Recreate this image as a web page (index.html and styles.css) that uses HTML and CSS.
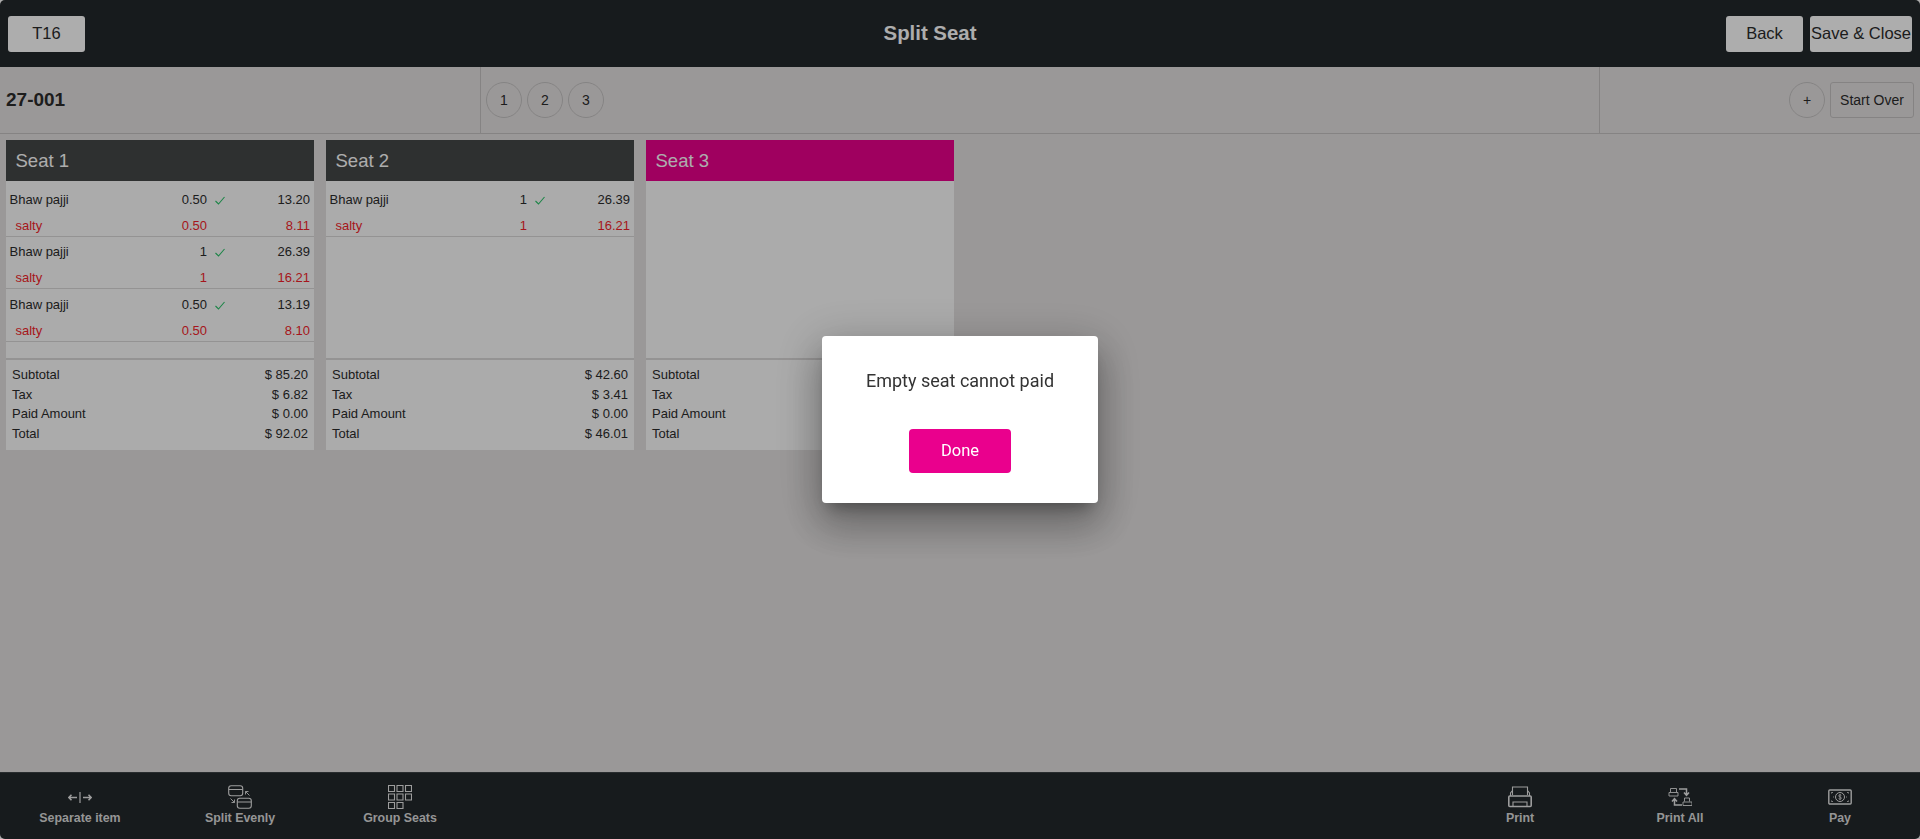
FILE: index.html
```html
<!DOCTYPE html>
<html lang="en">
<head>
  <meta charset="UTF-8" />
  <meta name="viewport" content="width=device-width, initial-scale=1.0" />
  <title>Split Seat</title>
  <link rel="stylesheet" href="styles.css">
</head>
<body>
  <div class="app">
    <header class="topbar">
      <div class="topbar-left"><button class="top-btn table-btn" type="button">T16</button></div>
      <h1>Split Seat</h1>
      <div class="topbar-right">
        <button class="top-btn back-btn" type="button">Back</button>
        <button class="top-btn save-btn" type="button">Save &amp; Close</button>
      </div>
    </header>

    <section class="check-bar">
      <div class="check-no">27-001</div>
      <div class="seat-tabs">
        <button class="circle-btn" type="button">1</button>
        <button class="circle-btn" type="button">2</button>
        <button class="circle-btn" type="button">3</button>
      </div>
      <div class="check-actions">
        <button class="circle-btn" type="button">+</button>
        <button class="over-btn" type="button">Start Over</button>
      </div>
    </section>

    <main class="seats">
      <article class="seat">
        <h2 class="seat-title">Seat 1</h2>
        <div class="seat-items">
          <div class="item">
            <div class="line"><span>Bhaw pajji</span><span class="qty">0.50</span><svg class="tick" viewBox="0 0 10 9"><path d="M.5 5l3 3L9.5 1"/></svg><span class="price">13.20</span></div>
            <div class="line mod"><span>salty</span><span class="qty">0.50</span><i></i><span class="price">8.11</span></div>
          </div>
          <div class="item">
            <div class="line"><span>Bhaw pajji</span><span class="qty">1</span><svg class="tick" viewBox="0 0 10 9"><path d="M.5 5l3 3L9.5 1"/></svg><span class="price">26.39</span></div>
            <div class="line mod"><span>salty</span><span class="qty">1</span><i></i><span class="price">16.21</span></div>
          </div>
          <div class="item">
            <div class="line"><span>Bhaw pajji</span><span class="qty">0.50</span><svg class="tick" viewBox="0 0 10 9"><path d="M.5 5l3 3L9.5 1"/></svg><span class="price">13.19</span></div>
            <div class="line mod"><span>salty</span><span class="qty">0.50</span><i></i><span class="price">8.10</span></div>
          </div>
        </div>
        <dl class="totals">
          <div><dt>Subtotal</dt><dd>$ 85.20</dd></div>
          <div><dt>Tax</dt><dd>$ 6.82</dd></div>
          <div><dt>Paid Amount</dt><dd>$ 0.00</dd></div>
          <div><dt>Total</dt><dd>$ 92.02</dd></div>
        </dl>
      </article>

      <article class="seat">
        <h2 class="seat-title">Seat 2</h2>
        <div class="seat-items">
          <div class="item">
            <div class="line"><span>Bhaw pajji</span><span class="qty">1</span><svg class="tick" viewBox="0 0 10 9"><path d="M.5 5l3 3L9.5 1"/></svg><span class="price">26.39</span></div>
            <div class="line mod"><span>salty</span><span class="qty">1</span><i></i><span class="price">16.21</span></div>
          </div>
        </div>
        <dl class="totals">
          <div><dt>Subtotal</dt><dd>$ 42.60</dd></div>
          <div><dt>Tax</dt><dd>$ 3.41</dd></div>
          <div><dt>Paid Amount</dt><dd>$ 0.00</dd></div>
          <div><dt>Total</dt><dd>$ 46.01</dd></div>
        </dl>
      </article>

      <article class="seat active">
        <h2 class="seat-title">Seat 3</h2>
        <div class="seat-items"></div>
        <dl class="totals">
          <div><dt>Subtotal</dt></div>
          <div><dt>Tax</dt></div>
          <div><dt>Paid Amount</dt></div>
          <div><dt>Total</dt></div>
        </dl>
      </article>
    </main>

    <footer class="bottombar">
      <div class="tool-group">
        <button class="tool" type="button">
          <svg width="24" height="24" viewBox="0 0 24 24"><path d="M12 7v11" stroke-width="1.2"/><path d="M.5 12.5h8.500M3.500 9.800L.8 12.500l2.700 2.700M15 12.500h8.500M20.500 9.800l2.700 2.700-2.700 2.700" stroke-width="1.6"/></svg>
          <span>Separate item</span>
        </button>
        <button class="tool" type="button">
          <svg width="24" height="24" viewBox="0 0 24 24"><rect x="0.7" y="0.7" width="14" height="10" rx="2.5"/><path d="M.7 4.500h14"/><rect x="9.300" y="13.300" width="14" height="10" rx="2.5"/><path d="M9.300 17h14"/><path d="M17.500 6.500h3M17.500 6.500v3M17.500 6.500l4 4M6.500 17.500h-3M6.500 17.500v-3M6.500 17.500l-4-4" stroke-width=".9"/></svg>
          <span>Split Evenly</span>
        </button>
        <button class="tool" type="button">
          <svg width="24" height="24" viewBox="0 0 24 24"><path d="M.5.500h6v6h-6zM9 .500h6v6H9zM17.500.500h6v6h-6zM.5 9h6v6h-6zM9 9h6v6H9zM17.500 9h6v6h-6zM.5 17.500h6v6h-6zM9 17.500h6v6H9z"/></svg>
          <span>Group Seats</span>
        </button>
      </div>
      <div class="tool-group">
        <button class="tool" type="button">
          <svg width="24" height="24" viewBox="0 0 24 24"><path d="M4.500 10V2h15v8M4.500 5.500L2.500 8v3M19.500 5.500l2 2.500v3"/><rect x="0.8" y="11" width="22.4" height="10.5" rx="1" stroke-width="1.6"/><path d="M5 21v-4h14v4"/></svg>
          <span>Print</span>
        </button>
        <button class="tool" type="button">
          <svg width="24" height="24" viewBox="0 0 24 24"><path d="M2.500 7V3.500h6V7M1 7.500h9V11H1zM16.500 16.500V13h5v3.500M15 17h9v3.500h-9z" stroke-width=".9"/><path d="M11 4h7.500v6M16 7.500l2.500 2.800L21 7.500M14 20H6.500v-6M4 16.500L6.500 13.700 9 16.500" stroke-width="1.5"/></svg>
          <span>Print All</span>
        </button>
        <button class="tool" type="button">
          <svg width="24" height="24" viewBox="0 0 24 24"><rect x="0.8" y="5" width="22.4" height="14" rx="1" stroke-width="1.4"/><circle cx="12" cy="12" r="4.500" stroke-width="1"/><path d="M13.300 10.300c-1-.8-2.600-.5-2.600.6 0 1.400 2.700.8 2.700 2.200 0 1.100-1.700 1.300-2.800.5M12 9v6M3.500 8.500V7.500h1.500M20.500 8.500V7.500H19M3.500 15.500v1h1.500M20.500 15.500v1H19M5 12h1M18 12h1" stroke-width=".8"/></svg>
          <span>Pay</span>
        </button>
      </div>
    </footer>
  </div>

  <div class="backdrop">
    <div class="dialog" role="dialog">
      <p>Empty seat cannot paid</p>
      <button class="done-btn" type="button">Done</button>
    </div>
  </div>
</body>
</html>
```

FILE: styles.css
```css
:root {
  --dark: #22282b;
  --seat-head: #444747;
  --pink: #ea008d;
  --page: #e4e1e1;
  --line: #dbd9d9;
  --rule: #c4c2c2;
}
html, body {
  height: 100%;
  margin: 0;
  padding: 0;
  background: #fff;
  font-family: 'Liberation Sans', Arial, sans-serif;
  color: #2c2c2c;
  overflow: hidden;
}
button {
  font-family: inherit;
  color: inherit;
  cursor: pointer;
}
.app {
  height: 100vh;
  display: flex;
  flex-direction: column;
  background: var(--page);
  border-radius: 5px;
  overflow: hidden;
}

/* top bar */
.topbar {
  height: 67px;
  flex: none;
  box-sizing: border-box;
  display: flex;
  align-items: center;
  background: var(--dark);
  padding: 0 8px;
}
.topbar h1 {
  flex: 1;
  margin: 0;
  text-align: center;
  font-size: 20.4px;
  font-weight: 700;
  color: #fff;
}
.topbar-left {
  width: 126px;
}
.topbar-right {
  display: flex;
  gap: 7px;
}
.top-btn {
  height: 36px;
  padding: 0;
  border: none;
  border-radius: 3px;
  background: #fff;
  font-size: 16.5px;
  display: block;
}
.table-btn { width: 77px; }
.back-btn { width: 77px; }
.save-btn { width: 102px; }

/* check row */
.check-bar {
  height: 67px;
  flex: none;
  box-sizing: border-box;
  display: flex;
  align-items: stretch;
  border-bottom: 1px solid var(--rule);
}
.check-no {
  width: 481px;
  box-sizing: border-box;
  padding-left: 6px;
  display: flex;
  align-items: center;
  font-size: 19px;
  font-weight: 700;
  border-right: 1px solid var(--rule);
}
.seat-tabs {
  width: 1119px;
  box-sizing: border-box;
  display: flex;
  align-items: center;
  gap: 5px;
  padding-left: 5px;
  border-right: 1px solid var(--rule);
}
.check-actions {
  flex: 1;
  display: flex;
  align-items: center;
  justify-content: flex-end;
  gap: 5px;
  padding-right: 6px;
}
.circle-btn {
  width: 36px;
  height: 36px;
  padding: 0;
  border: 1px solid var(--rule);
  border-radius: 50%;
  background: transparent;
  font-size: 14px;
}
.over-btn {
  width: 84px;
  height: 36px;
  padding: 0;
  border: 1px solid var(--rule);
  border-radius: 3px;
  background: transparent;
  font-size: 14px;
}

/* seats */
.seats {
  flex: 1;
  display: flex;
  align-items: flex-start;
  gap: 12px;
  padding: 6px;
}
.seat {
  width: 308px;
  background: #fcfcfc;
}
.seat-title {
  height: 41px;
  margin: 0;
  padding: 0 9.5px;
  display: flex;
  align-items: center;
  font-size: 18.5px;
  font-weight: 400;
  color: #fff;
  background: var(--seat-head);
}
.seat.active .seat-title {
  background: var(--pink);
}
.seat-items {
  height: 174px;
  padding-top: 3px;
  font-size: 13px;
}
.item {
  height: 52.5px;
  box-sizing: border-box;
  padding-top: 2.5px;
  border-bottom: 1px solid var(--line);
}
.line {
  height: 25px;
  display: grid;
  grid-template-columns: 130px 67.5px 24px 1fr;
  align-items: center;
  padding: 0 4px 0 3.5px;
}
.line .qty, .line .price {
  text-align: right;
}
.mod {
  height: 23px;
  margin-top: 2px;
  color: #f51f2b;
}
.mod span:first-child {
  padding-left: 6px;
}
.tick {
  width: 10px;
  height: 9px;
  margin: 2px 0 0 8px;
  fill: none;
  stroke: #2bc46a;
  stroke-width: 1.1;
}
.totals {
  margin: 0;
  padding: 5px 6px 7px;
  border-top: 2px solid var(--line);
  font-size: 13px;
}
.totals div {
  height: 19.5px;
  display: flex;
  align-items: center;
  justify-content: space-between;
}
.totals dt, .totals dd {
  margin: 0;
}

/* bottom bar */
.bottombar {
  height: 67px;
  flex: none;
  box-sizing: border-box;
  display: flex;
  justify-content: space-between;
  background: var(--dark);
  border-top: 1px solid #3c4144;
}
.tool-group {
  display: flex;
}
.tool {
  width: 160px;
  padding: 12px 0 0;
  border: none;
  background: none;
  display: flex;
  flex-direction: column;
  align-items: center;
  color: #dcdcdc;
  font-size: 12.4px;
  font-weight: 700;
}
.tool svg {
  fill: none;
  stroke: #e8e8e8;
  stroke-width: 1.1;
}
.tool span {
  line-height: 16px;
  margin-top: 1px;
}

/* dialog */
.backdrop {
  position: fixed;
  top: 0;
  right: 0;
  bottom: 0;
  left: 0;
  display: flex;
  align-items: center;
  justify-content: center;
  background: rgba(0,0,0,0.32);
}
.dialog {
  width: 276px;
  height: 167px;
  box-sizing: border-box;
  padding: 34px 0 0;
  display: flex;
  flex-direction: column;
  align-items: center;
  background: #fff;
  border-radius: 4px;
  font-family: Roboto, sans-serif;
  box-shadow: 0 11px 15px -7px rgba(0,0,0,0.3), 0 24px 38px 3px rgba(0,0,0,0.2), 0 9px 46px 8px rgba(0,0,0,0.18);
}
.dialog p {
  margin: 0 0 38px;
  font-size: 18px;
  line-height: 21px;
  color: #333;
}
.done-btn {
  width: 102px;
  height: 44px;
  padding: 0 0 2px;
  border: none;
  border-radius: 4px;
  background: var(--pink);
  color: #fff;
  font-size: 16.5px;
  font-family: Roboto, sans-serif;
}
```
